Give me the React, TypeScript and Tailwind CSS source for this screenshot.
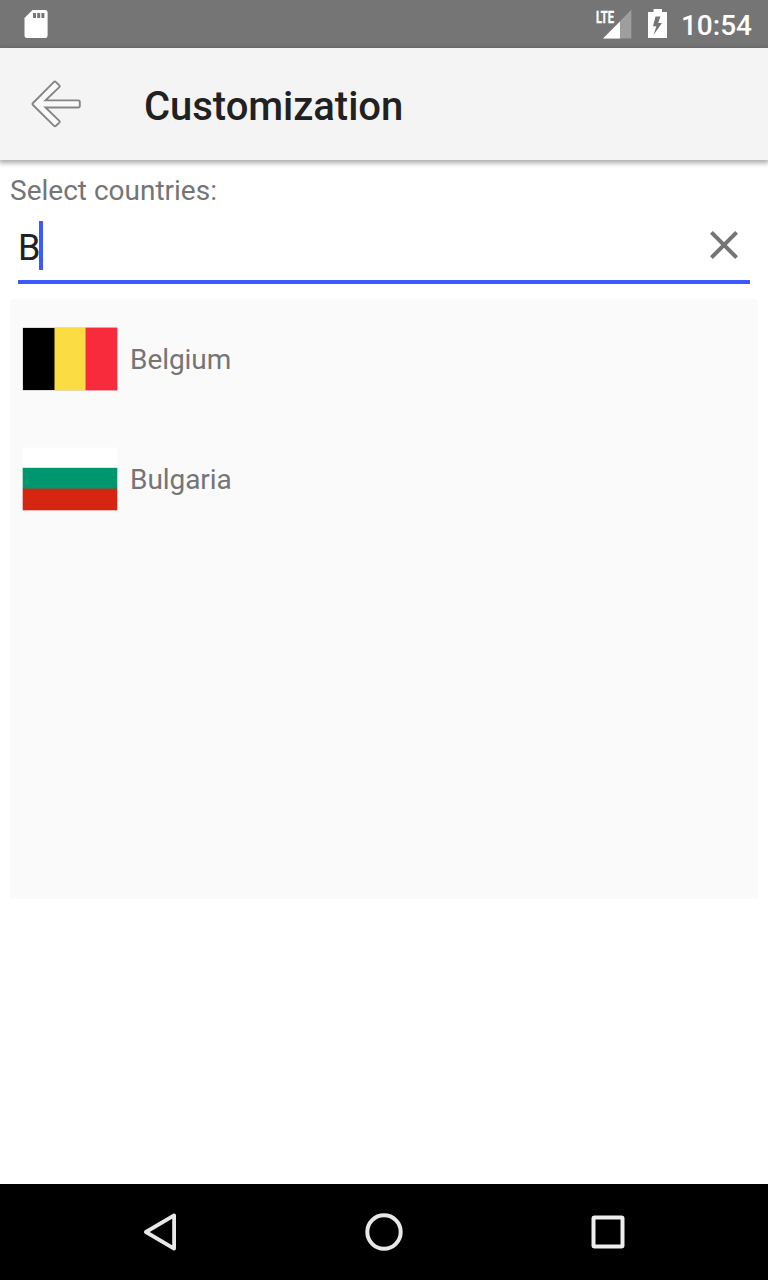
import React from "react";

function StatusBar() {
  return (
    <header className="flex h-12 items-center bg-[#757575] pl-6 pr-4 text-white">
      <svg className="h-7 w-6" viewBox="0 0 24 28" aria-hidden="true">
        <path
          fill="#fff"
          fillRule="evenodd"
          d="M8.5 0H21.2Q23.6 0 23.6 2.4V25.5Q23.6 28 21.2 28H3Q.5 28 .5 25.5V8ZM9 3V8H12V3ZM13.2 3V8H16.2V3ZM17.4 3V8H20.4V3Z"
        />
      </svg>
      <svg className="ml-auto h-8 w-9" viewBox="0 0 36 32" aria-hidden="true">
        <path d="M7 30.5 35.3 1.8V30.5Z" fill="#fff" fillOpacity=".3" />
        <path d="M7 30.5 24 13.5V30.5Z" fill="#fff" />
        <text
          x="0"
          y="14.7"
          fill="#fff"
          stroke="#fff"
          strokeWidth=".4"
          textLength="18"
          lengthAdjust="spacingAndGlyphs"
          className="font-[Roboto,sans-serif] text-[17px] font-bold"
        >
          LTE
        </text>
      </svg>
      <svg className="ml-4 h-[30px] w-5" viewBox="0 0 20 30" aria-hidden="true">
        <path
          fill="#fff"
          fillRule="evenodd"
          d="M5.5 0H14V3H19V29H0V3H5.5ZM12.5 7.5H7.5L5 17.2H8.4L5.5 26 14 14H10.2Z"
        />
      </svg>
      <time className="ml-[13px] mt-1 text-[28px] font-medium leading-8">10:54</time>
    </header>
  );
}

function Toolbar() {
  return (
    <div className="flex h-28 items-center bg-[#f4f4f4] pl-[30px] shadow-[0_2px_5px_1px_rgba(0,0,0,0.34)]">
      <svg className="h-12 w-[52px]" viewBox="0 0 52 48" aria-hidden="true">
        <path
          d="M24 1.9Q25 1.2 26 2.1L29.3 5.3Q30.1 6.2 29.3 7.1L15.5 20.4H48.2Q49.8 20.4 49.8 21.9V26Q49.8 27.5 48.2 27.5H15.5L29.3 40.8Q30.1 41.7 29.3 42.6L26 45.8Q25 46.6 24 45.8L3 25Q2 24 3 23Z"
          fill="#f9f9f9"
          stroke="#858585"
          strokeWidth="1.9"
        />
      </svg>
      <h1 className="ml-[62px] mt-1.5 text-[40px] font-medium leading-[48px] tracking-[-0.04px] text-[#212121]">Customization</h1>
    </div>
  );
}

function BelgiumFlag() {
  return (
    <svg className="h-16 w-24" viewBox="0 0 96 64" aria-hidden="true">
      <rect x=".6" y=".6" width="94.8" height="62.8" fill="#000" fillOpacity=".3" />
      <rect x="1" y="1" width="32" height="62" fill="#000" />
      <rect x="32.5" y=".7" width="31.2" height="62.6" fill="#fbdc43" />
      <rect x="63.6" y=".7" width="31.6" height="62.6" fill="#f72b3b" />
    </svg>
  );
}

function BulgariaFlag() {
  return (
    <svg className="h-16 w-24" viewBox="0 0 96 64" aria-hidden="true">
      <rect x=".6" y=".6" width="94.8" height="20.4" fill="#fff" />
      <rect x=".7" y="20.8" width="94.6" height="21.2" fill="#00966e" />
      <rect x=".7" y="41.6" width="94.6" height="21.7" fill="#d62612" />
    </svg>
  );
}

const countries = [
  { name: "Belgium", Flag: BelgiumFlag },
  { name: "Bulgaria", Flag: BulgariaFlag },
];

function CountryPicker() {
  return (
    <main className="flex-1 px-2.5 pt-[13px]">
      <div className="text-[28px] leading-9 text-[#757575]">Select countries:</div>
      <div className="mx-2 mt-[7px] flex h-[68px] items-start border-b-4 border-[#3d5afe] pt-[5px]">
        <span className="mt-1.5 w-[21px] text-[36px] leading-[42px] text-[#212121]">B</span>
        <span className="h-[49px] w-1 bg-[#3d5afe]" />
        <svg className="ml-auto mr-3 mt-[10px] h-7 w-7" viewBox="0 0 28 28" aria-label="Clear">
          <path d="M1.4 1.4 26.6 26.6M26.6 1.4 1.4 26.6" stroke="#757575" strokeWidth="4" />
        </svg>
      </div>
      <ul className="mt-[15px] h-[600px] rounded-[3px] bg-[#fafafa]">
        {countries.map(({ name, Flag }) => (
          <li key={name} className="flex h-[120px] items-center gap-3 pl-3">
            <Flag />
            <span className="mt-0.5 text-[28px] leading-8 tracking-[-0.06px] text-[#757575]">{name}</span>
          </li>
        ))}
      </ul>
    </main>
  );
}

function NavigationBar() {
  return (
    <nav className="flex h-24 items-center justify-center gap-44 bg-black">
      <svg className="h-12 w-12" viewBox="0 0 48 48" fill="none" stroke="#e8e8e8" aria-label="Back">
        <path d="M9.9 24 38.1 7.4V40.6Z" strokeWidth="3.8" strokeLinejoin="round" />
      </svg>
      <svg className="h-12 w-12" viewBox="0 0 48 48" fill="none" stroke="#e8e8e8" aria-label="Home">
        <circle cx="24" cy="24" r="16.7" strokeWidth="4" />
      </svg>
      <svg className="h-12 w-12" viewBox="0 0 48 48" fill="none" stroke="#eee" aria-label="Recents">
        <rect x="9.5" y="9.5" width="29" height="29" rx="1" strokeWidth="4" />
      </svg>
    </nav>
  );
}

export default function App() {
  return (
    <div className="flex h-[1280px] w-[768px] flex-col overflow-hidden bg-white font-[Roboto,sans-serif]">
      <StatusBar />
      <Toolbar />
      <CountryPicker />
      <NavigationBar />
    </div>
  );
}
